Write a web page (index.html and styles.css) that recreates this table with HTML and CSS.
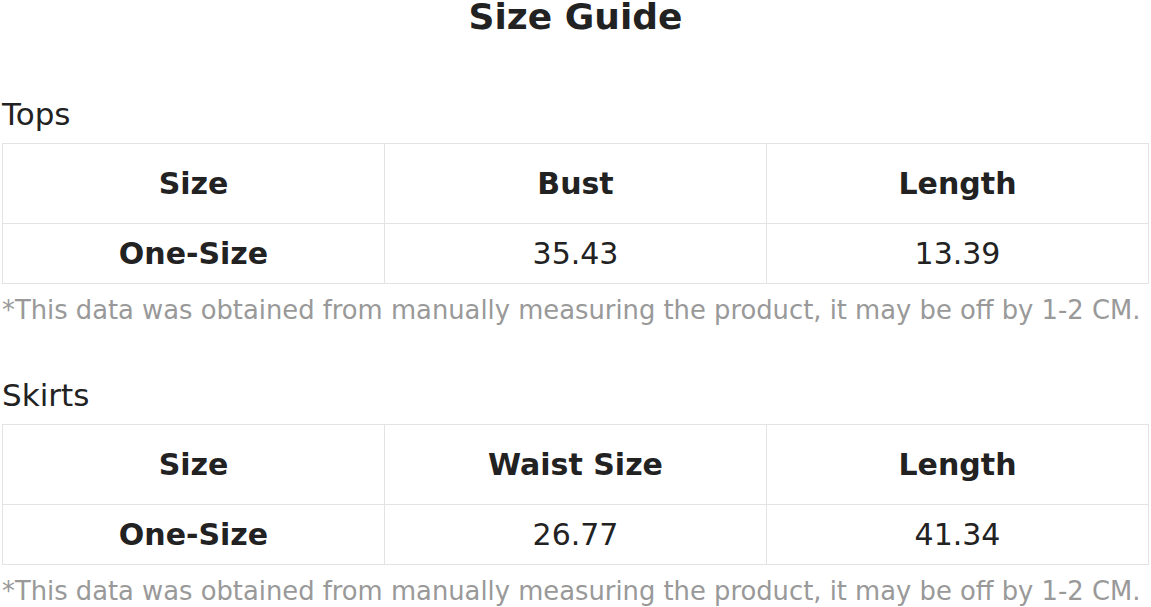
FILE: index.html
```html
<!DOCTYPE html>
<html lang="en">
<head>
<meta charset="utf-8">
<title>Size Guide</title>
<link rel="stylesheet" href="styles.css">
</head>
<body>
<div class="page">
  <h1 class="title">Size Guide</h1>

  <section class="section">
    <h2 class="section-title">Tops</h2>
    <table class="size-table">
      <thead>
        <tr><th>Size</th><th>Bust</th><th>Length</th></tr>
      </thead>
      <tbody>
        <tr><th>One-Size</th><td>35.43</td><td>13.39</td></tr>
      </tbody>
    </table>
    <p class="note">*This data was obtained from manually measuring the product, it may be off by 1-2 CM.</p>
  </section>

  <section class="section">
    <h2 class="section-title">Skirts</h2>
    <table class="size-table">
      <thead>
        <tr><th>Size</th><th>Waist Size</th><th>Length</th></tr>
      </thead>
      <tbody>
        <tr><th>One-Size</th><td>26.77</td><td>41.34</td></tr>
      </tbody>
    </table>
    <p class="note">*This data was obtained from manually measuring the product, it may be off by 1-2 CM.</p>
  </section>
</div>
</body>
</html>
```
FILE: styles.css
```css
html, body {
  margin: 0;
  padding: 0;
  background: #ffffff;
}

body {
  font-family: "DejaVu Sans", Verdana, sans-serif;
  color: #222222;
}

.page {
  padding: 0 2px;
}

.title {
  margin: 0;
  font-size: 36px;
  line-height: 36px;
  font-weight: bold;
  text-align: center;
  color: #222222;
  position: relative;
  top: -1px;
}

.section {
  margin-top: 61px;
}

.section + .section {
  margin-top: 50px;
}

.section-title {
  margin: 0 0 12px;
  font-size: 31px;
  line-height: 34px;
  font-weight: normal;
  color: #222222;
}

.size-table {
  width: 100%;
  border-collapse: collapse;
  table-layout: fixed;
}

.size-table th,
.size-table td {
  border: 1px solid #e3e3e3;
  text-align: center;
  vertical-align: middle;
  font-size: 30px;
  padding: 0;
}

.size-table th {
  font-weight: bold;
}

.size-table td {
  font-weight: normal;
}

.size-table thead tr {
  height: 80px;
}

.size-table tbody tr {
  height: 60px;
}

.note {
  margin: 8px 0 0;
  font-size: 25.8px;
  line-height: 36px;
  color: #999999;
  white-space: nowrap;
}
```
